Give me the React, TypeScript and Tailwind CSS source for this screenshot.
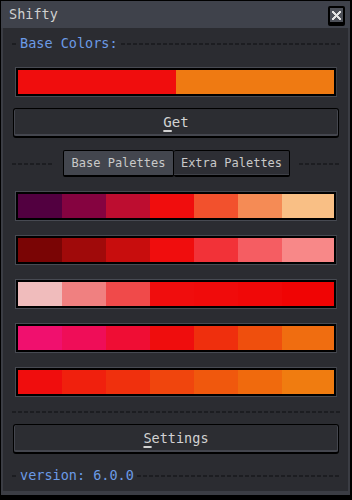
import { ReactNode } from 'react';

const basePair = ['#f00d0d', '#ef7a12'];

const palettes: string[][] = [
  ['#520040', '#850340', '#bd0d30', '#f00d0d', '#f2512d', '#f58b55', '#f9bf85'],
  ['#7a0505', '#a00a0a', '#c80d0d', '#f00d0d', '#f23238', '#f55d62', '#f88888'],
  ['#f0bcbc', '#f08080', '#f04a4a', '#f00d0d', '#f00b0b', '#f00808', '#f00404'],
  ['#f0106e', '#ef0d58', '#ef0d34', '#ef0d0d', '#ef2f0d', '#ef4f0d', '#f06d10'],
  ['#f00d0d', '#f0200d', '#f0300d', '#f0450d', '#f0580d', '#f06a0d', '#f07c10'],
];

const mono = "font-['DejaVu_Sans_Mono',monospace]";

function Dashes({ className = '' }: { className?: string }) {
  return (
    <div
      className={`h-[2px] bg-[repeating-linear-gradient(90deg,#1c1d21_0_4px,transparent_4px_6px)] ${className}`}
    />
  );
}

function Separator({ label }: { label: string }) {
  return (
    <div className="flex items-center h-4 ml-[9px] mr-[8px]">
      <Dashes className="w-[5px]" />
      <span className={`${mono} text-[13.5px] leading-none text-[#6b9be6] px-[3px]`}>{label}</span>
      <Dashes className="flex-1" />
    </div>
  );
}

function Swatches({ colors, wide }: { colors: string[]; wide?: boolean }) {
  return (
    <div className="ml-[12px] w-[322px] border border-[#474a52] border-r-[#3c3e45]">
      <div className="flex h-[28px] border-2 border-black">
        {colors.map((c, i) => (
          <div
            key={i}
            className={wide || i === colors.length - 1 ? 'flex-1' : 'w-[44px]'}
            style={{ backgroundColor: c }}
          />
        ))}
      </div>
    </div>
  );
}

function Button({ children }: { children: ReactNode }) {
  return (
    <div
      className={`ml-[10px] w-[326px] h-[30px] flex items-center justify-center rounded-[3px] border border-black border-b-2 bg-[#2c2d32] shadow-[inset_1px_0_0_#44464e,inset_-1px_0_0_#44464e,inset_0_-2px_0_#44464e] ${mono} text-[14px] text-[#d2d2d2]`}
    >
      {children}
    </div>
  );
}

export default function App() {
  return (
    <div className="w-[352px] h-[500px] bg-black pt-px pl-px pr-[2px] pb-[5px]">
      <div className="h-full flex flex-col border-x-2 border-b-4 border-[#3b3d44] bg-[#2b2c31]">
        {/* title bar */}
        <div className="h-[27px] -mx-[2px] flex items-center justify-between bg-[#3f424b] pl-[8px] pr-[5px]">
          <span className={`${mono} text-[13.5px] text-[#d0d0d0]`}>Shifty</span>
          <div className="w-[17px] h-[20px] bg-black rounded-[2px] p-[2px] pb-[4px] mt-[3px]">
            <div className="w-full h-full bg-[#4d5058] flex items-center justify-center">
              <svg width="9" height="9" viewBox="0 0 9 9" shapeRendering="crispEdges">
                <path
                  d="M0 0h2v1h1v1h1v1h1v-1h1v-1h1v-1h2v2h-1v1h-1v1h-1v1h1v1h1v1h1v2h-2v-1h-1v-1h-1v-1h-1v1h-1v1h-1v1h-2v-2h1v-1h1v-1h1v-1h-1v-1h-1v-1h-1z"
                  fill="#e2e2e2"
                />
              </svg>
            </div>
          </div>
        </div>

        <div className="flex flex-col">
          <div className="mt-[8px]">
            <Separator label="Base Colors:" />
          </div>

          <div className="mt-[15px]">
            <Swatches colors={basePair} wide />
          </div>

          <div className="mt-[11px]">
            <Button>
              <span>
                <span className="underline decoration-2 underline-offset-[3px]">G</span>et
              </span>
            </Button>
          </div>

          {/* tabs */}
          <div className="mt-[12px] flex items-center h-[27px]">
            <Dashes className="ml-[9px] w-[40px]" />
            <div className="flex ml-[11px]">
              <div
                className={`w-[111px] h-[27px] flex items-center justify-center border border-black border-b-2 rounded-[2px] bg-[#43464e] ${mono} text-[12px] text-[#c9c9c9]`}
              >
                Base Palettes
              </div>
              <div
                className={`w-[116px] h-[27px] flex items-center justify-center border border-black border-b-2 border-l-0 rounded-[2px] bg-[#2d2e34] shadow-[inset_0_-1px_0_#3f4148] ${mono} text-[12px] text-[#c9c9c9]`}
              >
                Extra Palettes
              </div>
            </div>
            <Dashes className="ml-[9px] w-[40px]" />
          </div>

          <div className="mt-[14px] flex flex-col gap-[14px]">
            {palettes.map((p, i) => (
              <Swatches key={i} colors={p} />
            ))}
          </div>

          <div className="mt-[14px] flex items-center h-[2px]">
            <Dashes className="ml-[9px] w-[328px]" />
          </div>

          <div className="mt-[11px]">
            <Button>
              <span className="text-[13.5px]">
                <span className="underline decoration-2 underline-offset-[3px]">S</span>ettings
              </span>
            </Button>
          </div>

          <div className="mt-[14px]">
            <Separator label="version: 6.0.0" />
          </div>
        </div>
      </div>
    </div>
  );
}
